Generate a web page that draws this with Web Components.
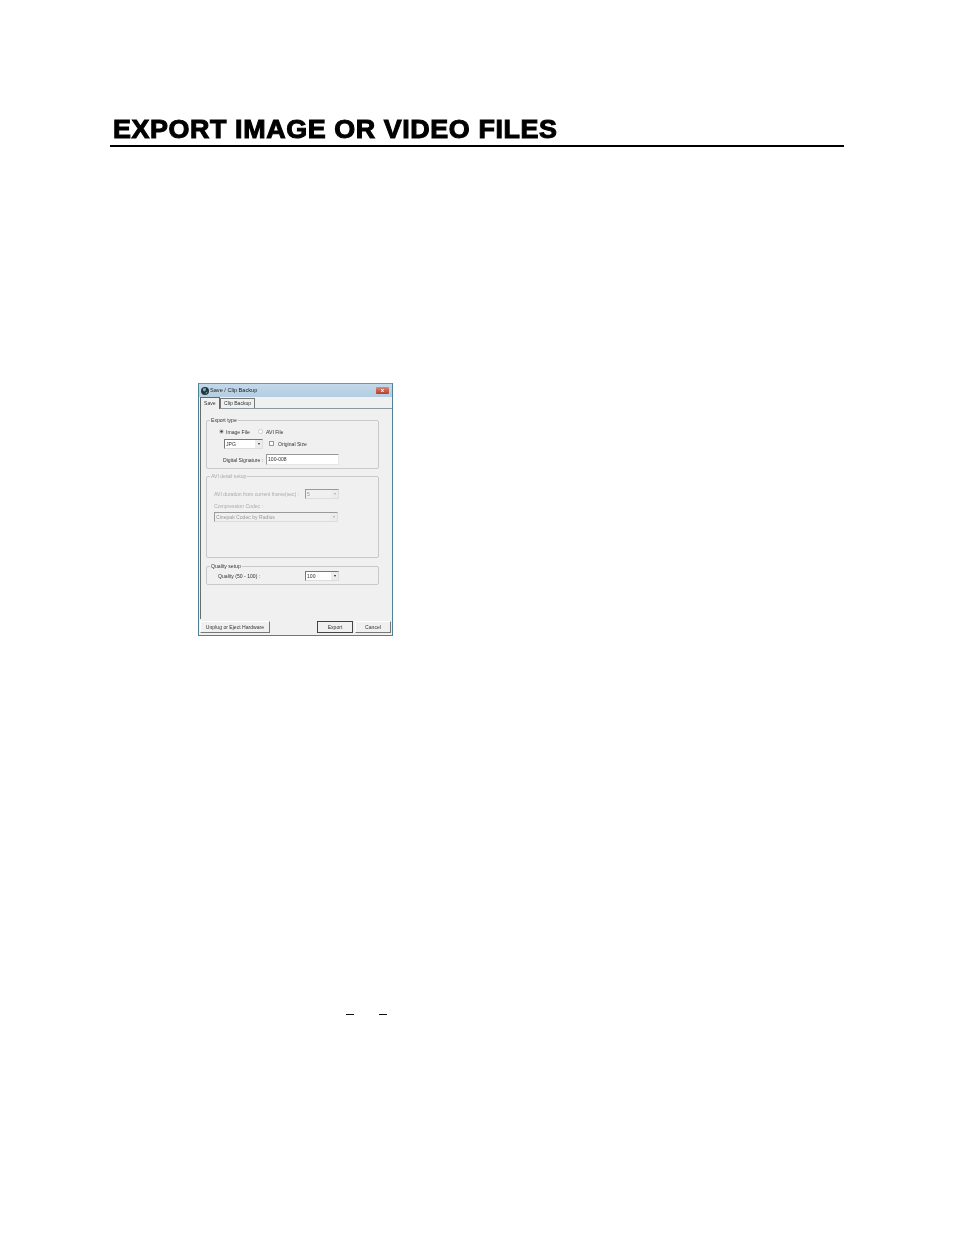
<!DOCTYPE html>
<html>
<head>
<meta charset="utf-8">
<title>Export image or video files</title>
<style>
  html, body { margin: 0; background: #fff; }
  body { width: 954px; height: 1235px; overflow: hidden; font-family: "Liberation Sans", Arial, sans-serif; }
  x-page-title { margin: 116px 110px 0 110px; }
  x-save-dialog { margin: 236px 0 0 198px; }
  x-blanks { margin: 378px 0 0 346px; }
</style>
</head>
<body>
<x-page-title>EXPORT IMAGE OR VIDEO FILES</x-page-title>

<x-save-dialog>
  <x-group label="Export type" style="height:49px; margin-top:11px">
    <div style="display:flex; align-items:center; height:11px; margin:5px 0 0 12px">
      <x-radio checked style="width:7px"></x-radio>
      <span style="width:32px">Image File</span>
      <x-radio style="width:8px"></x-radio>
      <span>AVI File</span>
    </div>
    <div style="display:flex; align-items:center; height:11px; margin:1px 0 0 17px">
      <x-combo value="JPG" style="width:39px"></x-combo>
      <x-check style="margin-left:6px"></x-check>
      <span style="margin-left:4px">Original Size</span>
    </div>
    <div style="display:flex; align-items:center; height:11px; margin:5px 0 0 16px">
      <span style="width:43px">Digital Signature :</span>
      <x-textbox value="100-008" style="width:73px"></x-textbox>
    </div>
  </x-group>

  <x-group label="AVI detail setup" disabled style="height:82px; margin-top:7px">
    <div style="display:flex; align-items:center; height:10px; margin:12px 0 0 7px">
      <span style="width:91px">AVI duration from current frame(sec) :</span>
      <x-combo value="5" disabled style="width:34px"></x-combo>
    </div>
    <div style="height:8px; line-height:8px; margin:3px 0 0 7px">Compression Codec :</div>
    <div style="margin:2px 0 0 7px"><x-combo value="Cinepak Codec by Radius" disabled style="width:124px"></x-combo></div>
  </x-group>

  <x-group label="Quality setup" style="height:19px; margin-top:8px">
    <div style="display:flex; align-items:center; height:10px; margin:4px 0 0 11px">
      <span style="width:87px">Quality (50 - 100) :</span>
      <x-combo value="100" style="width:34px"></x-combo>
    </div>
  </x-group>

  <x-button slot="left" style="width:70px">Unplug or Eject Hardware</x-button>
  <x-button slot="right" default style="width:36px">Export</x-button>
  <x-button slot="right" style="width:36px">Cancel</x-button>
</x-save-dialog>

<x-blanks></x-blanks>

<script>
class PageTitle extends HTMLElement {
  constructor() {
    super();
    this.attachShadow({ mode: 'open' }).innerHTML = `
      <style>
        :host { display: block; border-bottom: 2px solid #000; height: 29px; }
        h1 {
          margin: 0 0 0 3px;
          font: bold 25px/26px "Liberation Sans", Arial, sans-serif;
          color: #000;
          white-space: nowrap;
          letter-spacing: 0.55px;
          -webkit-text-stroke: 1px #000;
          transform: scaleX(1.075);
          transform-origin: left center;
        }
      </style>
      <h1><slot></slot></h1>`;
  }
}

class SaveDialog extends HTMLElement {
  constructor() {
    super();
    this.attachShadow({ mode: 'open' }).innerHTML = `
      <style>
        :host {
          display: block;
          box-sizing: border-box;
          width: 195px;
          height: 253px;
          border: 1px solid #4f8196;
          border-top-color: #6f93ad;
          background: #f0f0f0;
          font: 5.1px/8px "Liberation Sans", Arial, sans-serif;
          color: #333;
          filter: blur(0.3px);
        }
        .title {
          display: flex;
          align-items: center;
          height: 13px;
          padding: 0 3px 0 2px;
          background: linear-gradient(#c4d9ea, #b3cde2);
          color: #222;
          font-size: 5.6px;
        }
        .title svg { flex: none; margin-right: 1px; }
        .title span { flex: 1; margin-top: -1px; }
        .close {
          width: 13px;
          height: 7px;
          border-radius: 1px;
          background: linear-gradient(#d98a78, #bb3a26);
          color: #fff;
          font: bold 6px/7px "Liberation Sans", Arial, sans-serif;
          text-align: center;
        }
        .tabs { display: flex; height: 10px; margin: 1px 0 0 1px; align-items: flex-end; }
        .tab {
          box-sizing: border-box;
          height: 10px;
          line-height: 9px;
          padding: 0 3px;
          border: 1px solid #777;
          border-bottom: 0;
          background: #f0f0f0;
          white-space: nowrap;
        }
        .tab.on { height: 12px; line-height: 10px; width: 20px; border-color: #666; position: relative; top: 1px; z-index: 1; padding: 0 3px; }
        .panel {
          box-sizing: border-box;
          height: 211px;
          margin-left: 1px;
          padding: 0 14px 0 5px;
          border-top: 1px solid #8a9aa3;
          border-left: 1px solid #6c6c6c;
        }
        .actions { display: flex; justify-content: space-between; padding: 2px 1px 0 1px; }
        .actions div { display: flex; gap: 2px; }
      </style>
      <div class="title">
        <svg width="8" height="8" viewBox="0 0 8 8">
          <circle cx="4" cy="4" r="4" fill="#26343c"/>
          <path d="M2 1.5 4.5 1 5 3 3.5 4.5 2 3.5Z" fill="#7db0c9"/>
          <path d="M5 5 6.5 4.5 6 6.5 4.5 7Z" fill="#5f9c72"/>
        </svg>
        <span>Save / Clip Backup</span>
        <div class="close">x</div>
      </div>
      <div class="tabs">
        <div class="tab on">Save</div>
        <div class="tab">Clip Backup</div>
      </div>
      <div class="panel"><slot></slot></div>
      <div class="actions">
        <div><slot name="left"></slot></div>
        <div><slot name="right"></slot></div>
      </div>`;
  }
}

class Group extends HTMLElement {
  constructor() {
    super();
    this.attachShadow({ mode: 'open' });
  }

  connectedCallback() {
    const muted = this.hasAttribute('disabled');
    this.shadowRoot.innerHTML = `
      <style>
        :host { display: block; position: relative; box-sizing: border-box; width: 173px; border: 1px solid #c8c8c8; border-radius: 2px; white-space: nowrap; color: ${muted ? '#aaa' : '#333'}; }
        .legend { position: absolute; left: 3px; top: -5px; padding: 0 1px; height: 8px; line-height: 8px; background: #f0f0f0; white-space: nowrap; }
      </style>
      <div class="legend">${this.getAttribute('label')}</div>
      <slot></slot>`;
  }
}

class Radio extends HTMLElement {
  constructor() {
    super();
    this.attachShadow({ mode: 'open' });
  }

  connectedCallback() {
    const dot = this.hasAttribute('checked') ? '<circle cx="2.5" cy="2.5" r="1.2" fill="#333"/>' : '';
    this.shadowRoot.innerHTML = `
      <style>:host { display: block; flex: none; } svg { display: block; }</style>
      <svg width="5" height="5" viewBox="0 0 5 5"><circle cx="2.5" cy="2.5" r="2.1" fill="#fff" stroke="#aaa" stroke-width=".5"/>${dot}</svg>`;
  }
}

class Check extends HTMLElement {
  constructor() {
    super();
    this.attachShadow({ mode: 'open' }).innerHTML = `
      <style>:host { display: block; flex: none; box-sizing: border-box; width: 5px; height: 5px; border: 1px solid #999; background: #fff; }</style>`;
  }
}

class Combo extends HTMLElement {
  constructor() {
    super();
    this.attachShadow({ mode: 'open' });
  }

  connectedCallback() {
    const off = this.hasAttribute('disabled');
    this.shadowRoot.innerHTML = `
      <style>
        :host {
          display: flex; flex: none; align-items: center; box-sizing: border-box; height: 10px;
          border: 1px solid ${off ? '#9a9a9a' : '#777'}; border-right-color: #ddd; border-bottom-color: #ddd;
          background: ${off ? '#f0f0f0' : '#fff'};
          color: ${off ? '#999' : '#333'};
        }
        span { flex: 1; padding-left: 1px; white-space: nowrap; }
        b { display: flex; flex: none; width: 7px; height: 8px; align-items: center; justify-content: center; background: #ececec; }
        i { display: block; width: 0; height: 0; border: 1.5px solid transparent; border-top: 2px solid ${off ? '#aaa' : '#222'}; border-bottom: 0; }
      </style>
      <span>${this.getAttribute('value')}</span><b><i></i></b>`;
  }
}

class TextBox extends HTMLElement {
  constructor() {
    super();
    this.attachShadow({ mode: 'open' });
  }

  connectedCallback() {
    this.shadowRoot.innerHTML = `
      <style>
        :host { display: block; flex: none; box-sizing: border-box; height: 11px; line-height: 8px; padding-left: 1px; border: 1px solid #999; border-right-color: #e6e6e6; border-bottom-color: #e6e6e6; background: #fff; }
      </style>${this.getAttribute('value')}`;
  }
}

class Button extends HTMLElement {
  constructor() {
    super();
    this.attachShadow({ mode: 'open' });
  }

  connectedCallback() {
    const edge = this.hasAttribute('default') ? '#444' : '#777';
    this.shadowRoot.innerHTML = `
      <style>
        :host {
          display: block; box-sizing: border-box; height: 12px; line-height: 10px; text-align: center; white-space: nowrap;
          border: 1px solid #fff; border-right-color: ${edge}; border-bottom-color: ${edge};
          ${this.hasAttribute('default') ? 'border-color: #444;' : ''}
          background: #f0f0f0; color: #333;
        }
      </style><slot></slot>`;
  }
}

// blanked-out underscores in the page text
class Blanks extends HTMLElement {
  constructor() {
    super();
    this.attachShadow({ mode: 'open' }).innerHTML = `
      <style>
        :host { display: flex; gap: 25px; }
        i { display: block; width: 8px; height: 1px; background: #111; }
      </style>
      <i></i><i></i>`;
  }
}

customElements.define('x-page-title', PageTitle);
customElements.define('x-save-dialog', SaveDialog);
customElements.define('x-group', Group);
customElements.define('x-radio', Radio);
customElements.define('x-check', Check);
customElements.define('x-combo', Combo);
customElements.define('x-textbox', TextBox);
customElements.define('x-button', Button);
customElements.define('x-blanks', Blanks);
</script>
</body>
</html>
